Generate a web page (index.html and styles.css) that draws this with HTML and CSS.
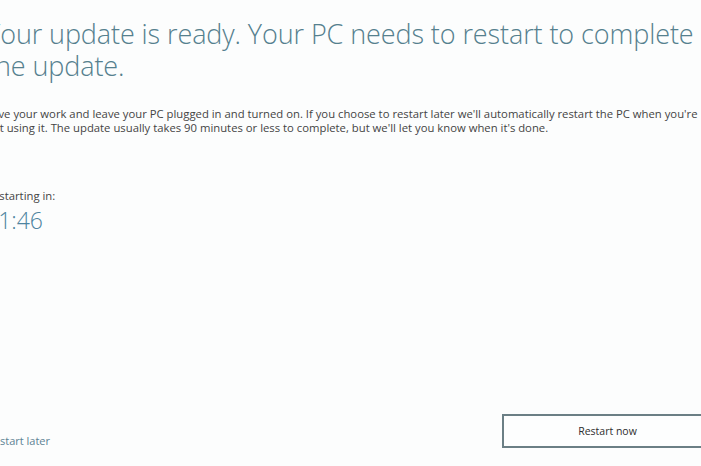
FILE: index.html
```html
<!DOCTYPE html>
<html lang="en">
<head>
<meta charset="utf-8">
<title>Update ready</title>
<link rel="stylesheet" href="styles.css">
</head>
<body>
<main class="page">
  <section class="content">
    <h1 class="title">Your update is ready. Your PC needs to restart to complete the update.</h1>
    <p class="desc">Save your work and leave your PC plugged in and turned on. If you choose to restart later we'll automatically restart the PC when you're not using it. The update usually takes 90 minutes or less to complete, but we'll let you know when it's done.</p>
    <div class="countdown">
      <div class="countdown-label">Restarting in:</div>
      <div class="countdown-time">01:46</div>
    </div>
  </section>
  <footer class="actions">
    <a class="later" href="#">Restart later</a>
    <button class="now" type="button">Restart now</button>
  </footer>
</main>
</body>
</html>
```
FILE: styles.css
```css
html, body {
  margin: 0;
  padding: 0;
  background: #fcfdfd;
  overflow: hidden;
}
.page {
  width: 701px;
  height: 466px;
  display: flex;
  flex-direction: column;
  justify-content: space-between;
  box-sizing: border-box;
  padding: 18px 0 18px 0;
  font-family: "Open Sans", "Noto Sans", sans-serif;
}
.content {
  margin-left: -14px;
  width: 730px;
}
.title {
  margin: 0;
  font-weight: 300;
  font-size: 27px;
  line-height: 32px;
  color: #55808e;
  letter-spacing: -0.1px;
  width: 716px;
}
.desc {
  margin: 25px 0 0 0;
  font-size: 11.3px;
  line-height: 14px;
  color: #444;
  width: 719px;
}
.countdown {
  margin-top: 54px;
}
.countdown-label {
  font-size: 11.3px;
  color: #444;
  line-height: 14px;
}
.countdown-time {
  font-weight: 300;
  font-size: 23px;
  line-height: 30px;
  color: #4d84a0;
  margin-left: -1px;
  margin-top: 2px;
}
.actions {
  display: flex;
  justify-content: space-between;
  align-items: center;
  margin-left: -13px;
  margin-right: -20px;
}
.later {
  font-size: 11px;
  color: #5c8394;
  text-decoration: none;
  margin-top: 20px;
}
.now {
  width: 219px;
  height: 34px;
  border: 2px solid #6b7f85;
  background: #fdfefe;
  font-family: "Open Sans", "Noto Sans", sans-serif;
  font-size: 10.5px;
  color: #2e2e2e;
  padding: 0 8px 0 0;
}
```
